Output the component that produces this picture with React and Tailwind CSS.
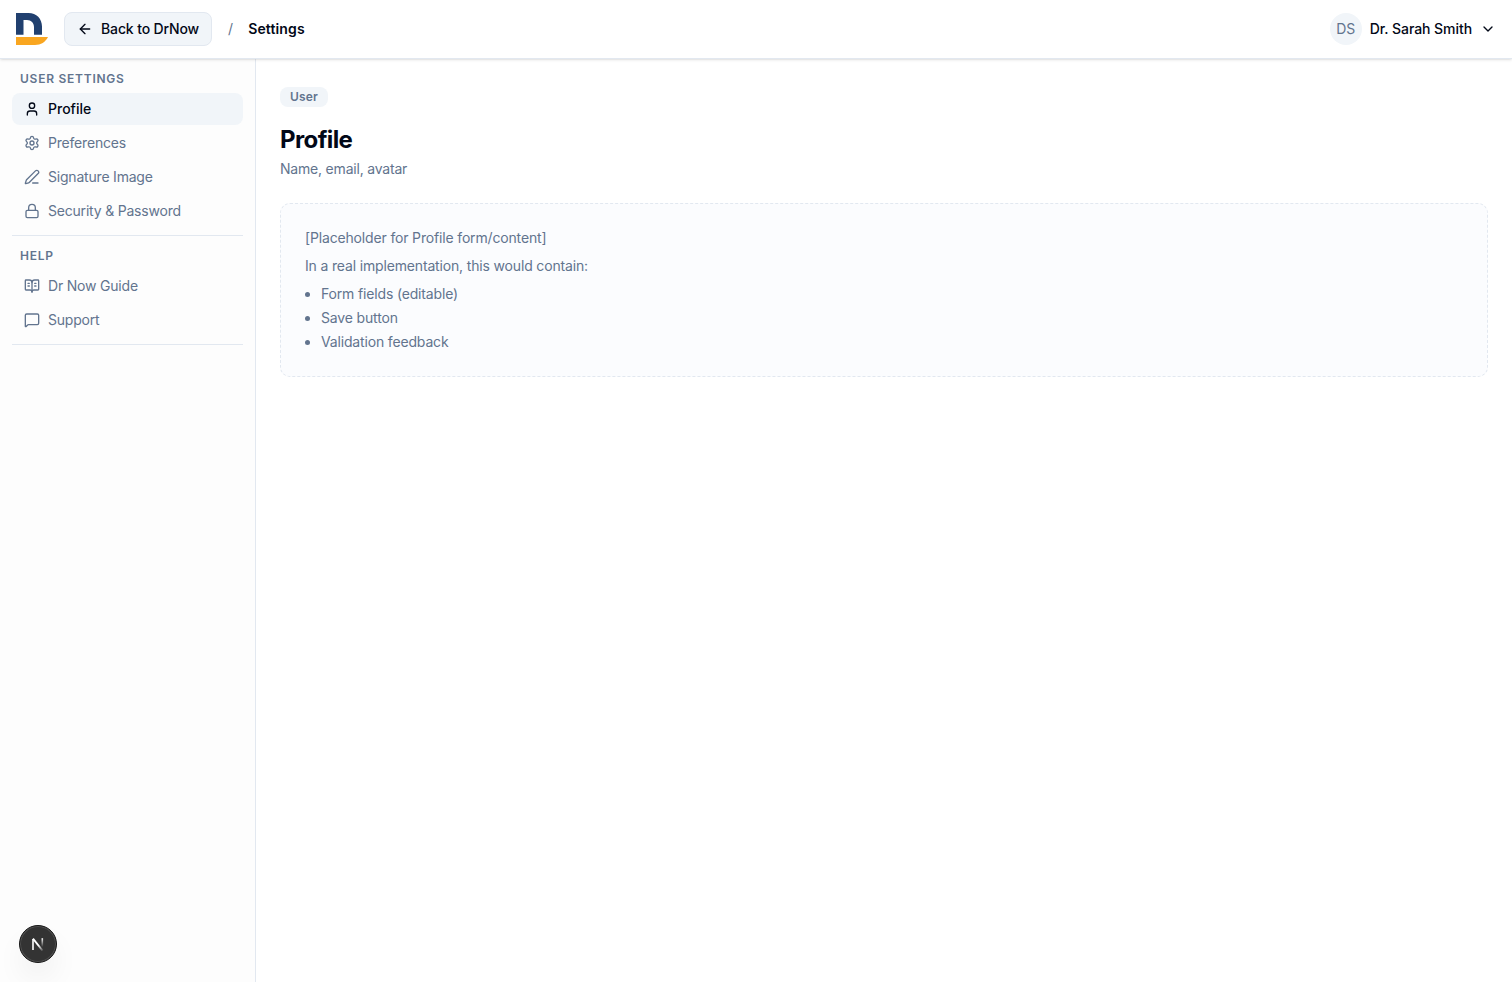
import {
  ArrowLeft,
  BookOpenText,
  ChevronDown,
  Lock,
  MessageSquare,
  PenLine,
  Settings,
  User,
} from 'lucide-react'
import clsx from 'clsx'

const sections = [
  {
    title: 'User Settings',
    items: [
      { label: 'Profile', icon: User, active: true },
      { label: 'Preferences', icon: Settings },
      { label: 'Signature Image', icon: PenLine },
      { label: 'Security & Password', icon: Lock },
    ],
  },
  {
    title: 'Help',
    items: [
      { label: 'Dr Now Guide', icon: BookOpenText },
      { label: 'Support', icon: MessageSquare },
    ],
  },
]

const contents = ['Form fields (editable)', 'Save button', 'Validation feedback']

function Logo() {
  return (
    <svg className="size-8" viewBox="0 0 32 32" aria-hidden="true">
      <path
        d="M0 0h12.5C20.5 0 26 5.8 26 13.5V21.7H18V14C18 10 15.2 7 11 7H7.5V21.7H0Z"
        fill="#21406f"
      />
      <path d="M0 24h32c-2.4 5-7.2 8-13 8H0Z" fill="#f9a620" />
    </svg>
  )
}

function Header() {
  return (
    <header className="relative z-10 flex shrink-0 items-center justify-between border-b border-slate-200 bg-white px-4 py-3 shadow-sm">
      <div className="flex items-center gap-4">
        <Logo />
        <button className="flex h-[34px] items-center gap-2 rounded-lg border border-slate-200 bg-[#f1f5f9] px-3 text-sm font-medium tracking-[-0.13px]">
          <ArrowLeft className="size-4" />
          Back to DrNow
        </button>
        <span className="text-sm text-slate-500">/</span>
        <span className="-ml-px text-sm font-semibold tracking-[0.15px]">Settings</span>
      </div>
      <button className="flex items-center gap-2 text-sm font-medium tracking-[-0.06px]">
        <span className="flex size-8 items-center justify-center rounded-full bg-[#f1f5f9] font-normal text-slate-500">
          DS
        </span>
        Dr. Sarah Smith
        <ChevronDown className="size-4" />
      </button>
    </header>
  )
}

function Sidebar() {
  return (
    <aside className="w-64 shrink-0 border-r border-slate-200 bg-[#fdfdfd] px-3">
      {sections.map((section) => (
        <div key={section.title} className="border-b border-slate-200 pt-3 pb-2">
          <h2 className="mb-1.5 px-2 text-xs font-semibold tracking-[0.75px] text-slate-500 uppercase">
            {section.title}
          </h2>
          <nav className="flex flex-col gap-0.5">
            {section.items.map(({ label, icon: Icon, active }) => (
              <a
                key={label}
                href="#"
                className={clsx(
                  'flex h-8 items-center gap-2 rounded-lg px-3 text-sm',
                  active
                    ? 'bg-[#f1f5f9] font-medium text-[#020817]'
                    : 'tracking-[-0.2px] text-slate-500',
                )}
              >
                <Icon className="size-4" />
                {label}
              </a>
            ))}
          </nav>
        </div>
      ))}
    </aside>
  )
}

// Floating Next.js dev tools button
function DevBadge() {
  return (
    <div className="fixed bottom-[19px] left-[19px] z-20 flex size-[38px] items-center justify-center rounded-full border border-[#171717] bg-[#333] shadow-[inset_0_0_0_1px_rgba(255,255,255,0.14),0_16px_32px_-8px_rgba(0,0,0,0.14)]">
      <svg width="14" height="14" viewBox="0 0 14 14" fill="none" aria-hidden="true">
        <defs>
          <linearGradient id="stem" x1="11" y1="1" x2="11" y2="10" gradientUnits="userSpaceOnUse">
            <stop stopColor="#fff" />
            <stop offset="1" stopColor="#fff" stopOpacity="0" />
          </linearGradient>
          <linearGradient id="diagonal" x1="8" y1="8" x2="13" y2="14" gradientUnits="userSpaceOnUse">
            <stop stopColor="#fff" />
            <stop offset="1" stopColor="#fff" stopOpacity="0" />
          </linearGradient>
        </defs>
        <path d="M2 13V2" stroke="#fff" strokeWidth="1.6" />
        <path d="M2 1.6L11.5 13.6" stroke="url(#diagonal)" strokeWidth="1.8" />
        <path d="M11.3 1.2V10" stroke="url(#stem)" strokeWidth="1.6" />
      </svg>
    </div>
  )
}

export default function App() {
  return (
    <div className="flex h-screen flex-col overflow-hidden bg-white font-[Inter,sans-serif] text-[#020817]">
      <Header />
      <div className="flex min-h-0 flex-1">
        <Sidebar />
        <main className="flex-1 px-6 pt-7">
          <span className="flex h-5 w-fit items-center rounded-lg bg-[#f1f5f9] px-2.5 text-xs font-semibold tracking-[0.15px] text-slate-500">
            User
          </span>
          <h1 className="mt-[17px] text-2xl font-bold tracking-[-0.6px]">Profile</h1>
          <p className="mt-[3px] text-sm tracking-[-0.2px] text-slate-500">Name, email, avatar</p>
          <div className="mt-6 rounded-[10px] border border-dashed border-slate-200 bg-[#fbfcfe] p-6 text-sm tracking-[-0.16px] text-slate-500">
            <p>[Placeholder for Profile form/content]</p>
            <p className="mt-2">In a real implementation, this would contain:</p>
            <ul className="mt-2 ml-4 list-disc space-y-1">
              {contents.map((item) => (
                <li key={item}>{item}</li>
              ))}
            </ul>
          </div>
        </main>
      </div>
      <DevBadge />
    </div>
  )
}
